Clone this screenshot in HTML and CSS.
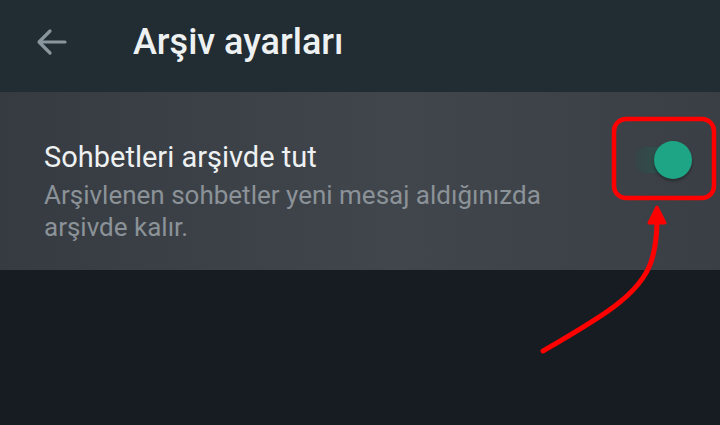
FILE: index.html
```html
<!DOCTYPE html>
<html>
<head>
    <title>Arşiv ayarları</title>
    <link rel="stylesheet" href="styles.css">
</head>
<body>
    <div class="screen">
        <div class="header">
            <svg class="back" width="32" height="28" viewBox="0 0 32 28">
                <path d="M30 14H4M15 3L4 14l11 11" fill="none" stroke="#8a969e" stroke-width="3.2" stroke-linecap="round" stroke-linejoin="round"/>
            </svg>
            <h1 class="title">Arşiv ayarları</h1>
        </div>
        <div class="setting">
            <div class="text">
                <div class="label">Sohbetleri arşivde tut</div>
                <div class="hint">Arşivlenen sohbetler yeni mesaj aldığınızda arşivde kalır.</div>
            </div>
            <div class="switch">
                <div class="track"></div>
                <div class="knob"></div>
            </div>
        </div>
        <svg class="mark" width="720" height="425" viewBox="0 0 720 425">
            <rect x="614" y="119" width="100" height="79" rx="12" fill="none" stroke="#f00" stroke-width="4.5"/>
            <path d="M543 351C600 318 640 295 651 262C655 250 657 236 657 220" fill="none" stroke="#f00" stroke-width="5" stroke-linecap="round"/>
            <path d="M649 223L657 207L665 223Z" fill="#f00" stroke="#f00" stroke-width="3" stroke-linejoin="round"/>
        </svg>
    </div>
</body>
</html>
```

FILE: styles.css
```css
body {
    margin: 0;
    font-family: Roboto, "Noto Sans", sans-serif;
    background: #161c21;
}
.screen {
    position: relative;
    width: 720px;
    height: 425px;
    overflow: hidden;
    background: #161c21;
}
.header {
    height: 92px;
    background: #222c33;
    display: flex;
    align-items: center;
    box-sizing: border-box;
    padding: 0 0 8px 35px;
}
.back {
    flex: none;
}
.title {
    margin: 0 0 0 66px;
    font-size: 36px;
    font-weight: 500;
    color: #eef1f2;
}
.setting {
    height: 178px;
    background: linear-gradient(90deg, #363b41 0%, #41464c 55%, #3a3f45 100%);
    display: flex;
    align-items: flex-start;
    box-sizing: border-box;
    padding: 48px 26px 0 44px;
}
.text {
    flex: 1;
}
.label {
    font-size: 29px;
    color: #eef1f2;
    line-height: 34px;
}
.hint {
    margin-top: 5px;
    width: 530px;
    font-size: 26px;
    line-height: 32px;
    color: #8b9298;
}
.switch {
    position: relative;
    flex: none;
    width: 60px;
    height: 40px;
}
.track {
    position: absolute;
    left: 0;
    top: 7px;
    width: 58px;
    height: 26px;
    border-radius: 13px;
    background: linear-gradient(90deg, rgba(40, 80, 74, 0.2) 0%, #2c514b 45%);
}
.knob {
    position: absolute;
    right: 2px;
    top: 1px;
    width: 38px;
    height: 38px;
    border-radius: 50%;
    background: #1ea585;
    box-shadow: 0 2px 3px rgba(0, 0, 0, 0.35);
}
.mark {
    position: absolute;
    left: 0;
    top: 0;
}
```
